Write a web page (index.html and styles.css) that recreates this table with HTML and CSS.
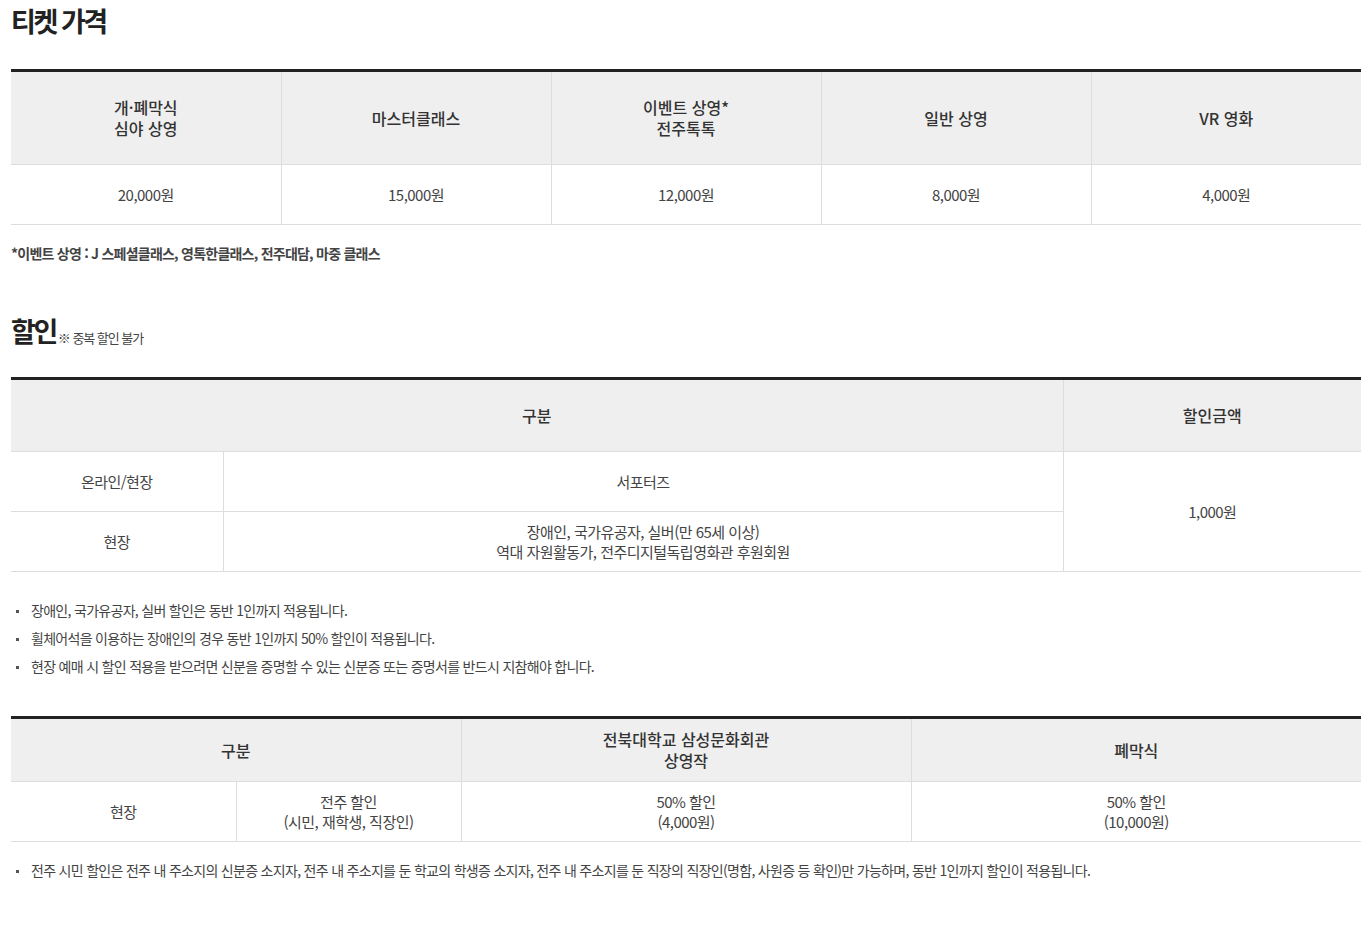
FILE: index.html
```html
<!DOCTYPE html>
<html lang="ko">
<head>
<meta charset="utf-8">
<link rel="stylesheet" href="styles.css">
</head>
<body>
<div class="page">
  <h2 class="title">티켓 가격</h2>
  <table class="tbl t1">
    <thead>
      <tr class="h1row">
        <th>개·폐막식<br>심야 상영</th>
        <th>마스터클래스</th>
        <th>이벤트 상영*<br>전주톡톡</th>
        <th>일반 상영</th>
        <th>VR 영화</th>
      </tr>
    </thead>
    <tbody>
      <tr>
        <td>20,000원</td>
        <td>15,000원</td>
        <td>12,000원</td>
        <td>8,000원</td>
        <td>4,000원</td>
      </tr>
    </tbody>
  </table>
  <p class="note">*이벤트 상영 : J 스페셜클래스, 영톡한클래스, 전주대담, 마중 클래스</p>

  <h2 class="title title2">할인<span class="sub">※ 중복 할인 불가</span></h2>
  <table class="tbl t2">
    <colgroup>
      <col class="c2a"><col class="c2b"><col class="c2c">
    </colgroup>
    <thead>
      <tr class="h2row">
        <th colspan="2">구분</th>
        <th>할인금액</th>
      </tr>
    </thead>
    <tbody>
      <tr>
        <td>온라인/현장</td>
        <td>서포터즈</td>
        <td rowspan="2">1,000원</td>
      </tr>
      <tr>
        <td>현장</td>
        <td>장애인, 국가유공자, 실버(만 65세 이상)<br>역대 자원활동가, 전주디지털독립영화관 후원회원</td>
      </tr>
    </tbody>
  </table>
  <ul class="bullets">
    <li>장애인, 국가유공자, 실버 할인은 동반 1인까지 적용됩니다.</li>
    <li>휠체어석을 이용하는 장애인의 경우 동반 1인까지 50% 할인이 적용됩니다.</li>
    <li>현장 예매 시 할인 적용을 받으려면 신분을 증명할 수 있는 신분증 또는 증명서를 반드시 지참해야 합니다.</li>
  </ul>

  <table class="tbl t3">
    <colgroup>
      <col class="c3a"><col class="c3a"><col class="c3b"><col class="c3b">
    </colgroup>
    <thead>
      <tr class="h3row">
        <th colspan="2">구분</th>
        <th>전북대학교 삼성문화회관<br>상영작</th>
        <th>폐막식</th>
      </tr>
    </thead>
    <tbody>
      <tr>
        <td>현장</td>
        <td>전주 할인<br>(시민, 재학생, 직장인)</td>
        <td>50% 할인<br>(4,000원)</td>
        <td>50% 할인<br>(10,000원)</td>
      </tr>
    </tbody>
  </table>
  <ul class="bullets b2">
    <li>전주 시민 할인은 전주 내 주소지의 신분증 소지자, 전주 내 주소지를 둔 학교의 학생증 소지자, 전주 내 주소지를 둔 직장의 직장인(명함, 사원증 등 확인)만 가능하며, 동반 1인까지 할인이 적용됩니다.</li>
  </ul>
</div>
</body>
</html>
```
FILE: styles.css
```css
* { box-sizing: border-box; }
html, body { margin: 0; padding: 0; background: #fff; }
body {
  font-family: "Noto Sans CJK KR", "Noto Sans", sans-serif;
  color: #444;
  letter-spacing: -0.05em;
}
.page { padding: 0 6px 0 11px; width: 1367px; }
.title {
  margin: 0;
  padding-top: 3px;
  font-size: 27px;
  line-height: 36px;
  font-weight: 700;
  color: #222;
  letter-spacing: -0.09em;
}
.title2 { margin-top: 45px; padding-top: 5px; display: flex; align-items: flex-end; }
.sub {
  font-size: 13px;
  font-weight: 400;
  color: #444;
  line-height: 20px;
  margin-left: 2px;
  padding-bottom: 1px;
  letter-spacing: -0.08em;
}
.tbl {
  width: 1350px;
  border-collapse: collapse;
  border-top: 3px solid #222;
  table-layout: fixed;
  text-align: center;
}
.t1 { margin-top: 30px; }
.t2 { margin-top: 28px; }
.t3 { margin-top: 40px; }
.tbl th {
  background: #efefef;
  color: #333;
  font-size: 16px;
  font-weight: 500;
  line-height: 21px;
  letter-spacing: 0;
  border: 1px solid #ddd;
  border-top: 0;
  padding: 0;
}
.tbl td {
  font-size: 15px;
  line-height: 20px;
  color: #444;
  letter-spacing: -0.035em;
  border: 1px solid #ddd;
  height: 60px;
  padding: 0;
}
.tbl tr > :first-child { border-left: 0; }
.tbl tr > :last-child { border-right: 0; }
.t2 tbody tr:first-child td:last-child { border-right: 0; }
.t2 tbody tr:nth-child(2) td:last-child { border-right: 1px solid #ddd; }
.h1row th { height: 94px; }
.h2row th { height: 73px; }
.h3row th { height: 64px; }
.c2a { width: 212px; }
.c2b { width: 840px; }
.c2c { width: 298px; }
.c3a { width: 225px; }
.c3b { width: 450px; }
.note {
  margin: 18px 0 0;
  font-size: 14px;
  line-height: 20px;
  font-weight: 700;
  color: #444;
  letter-spacing: -0.055em;
}
.bullets {
  list-style: none;
  margin: 28px 0 0;
  padding: 0;
}
.bullets li {
  position: relative;
  padding-left: 20px;
  font-size: 14px;
  line-height: 20px;
  margin-bottom: 8px;
  color: #444;
  letter-spacing: -0.05em;
}
.bullets li::before {
  content: "";
  position: absolute;
  left: 5px;
  top: 10px;
  width: 3px;
  height: 3px;
  background: #555;
}
.b2 { margin-top: 18px; }
```
